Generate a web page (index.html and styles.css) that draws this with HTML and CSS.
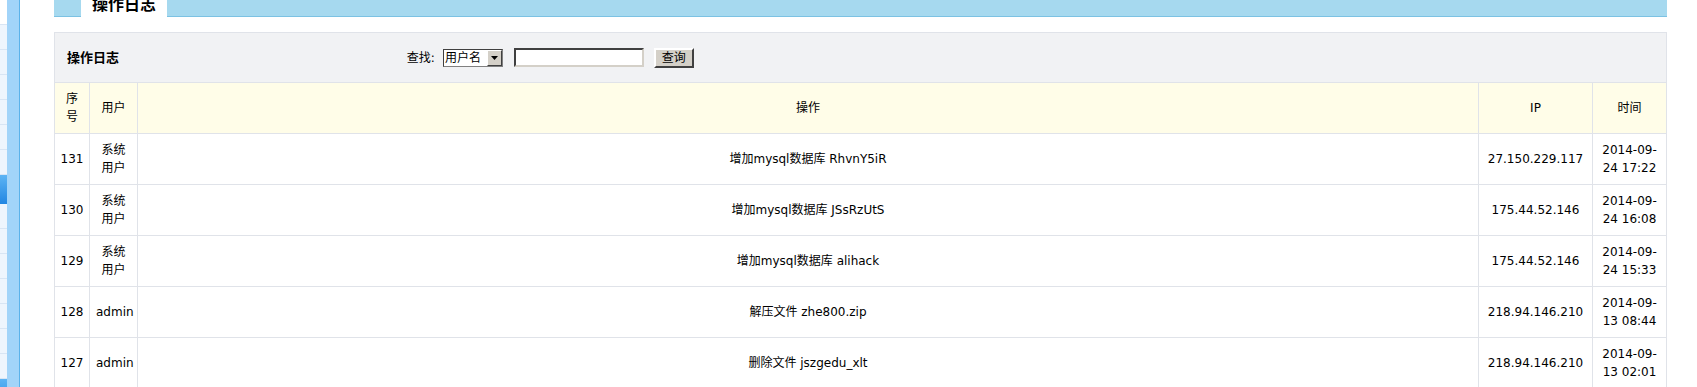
FILE: index.html
```html
<!DOCTYPE html>
<html>
<head>
    <link rel="stylesheet" href="styles.css">
</head>
<body>
    <div class="sidebar">
        <ul class="menu">
            <li class="menu-item first"></li>
            <li class="menu-item"></li>
            <li class="menu-item"></li>
            <li class="menu-item"></li>
            <li class="menu-item"></li>
            <li class="menu-item"></li>
            <li class="menu-item"></li>
            <li class="menu-item active"></li>
            <li class="menu-item"></li>
            <li class="menu-item"></li>
            <li class="menu-item"></li>
            <li class="menu-item"></li>
            <li class="menu-item"></li>
            <li class="menu-item"></li>
            <li class="menu-item"></li>
            <li class="menu-item active"></li>
        </ul>
        <div class="strip"></div>
    </div>

    <div class="main">
        <div class="tabbar">
            <span class="tab">操作日志</span>
        </div>

        <table class="log-table">
            <colgroup>
                <col class="col-id">
                <col class="col-user">
                <col>
                <col class="col-ip">
                <col class="col-time">
            </colgroup>
            <tr>
                <td colspan="5" class="toolbar">
                    <span class="toolbar-title">操作日志</span>
                    <span class="search">
                        <span class="search-label">查找:</span>
                        <span class="select">
                            <span class="select-value">用户名</span>
                            <span class="select-btn">
                                <svg width="7" height="4" viewBox="0 0 7 4"><path d="M0 0h7L3.5 4z" fill="#000"/></svg>
                            </span>
                        </span>
                        <input type="text" class="search-input">
                        <button class="search-btn">查询</button>
                    </span>
                </td>
            </tr>
            <tr class="head">
                <th>序号</th>
                <th>用户</th>
                <th>操作</th>
                <th>IP</th>
                <th>时间</th>
            </tr>
            <tr>
                <td>131</td>
                <td>系统用户</td>
                <td><span class="action">增加mysql数据库</span> RhvnY5iR</td>
                <td>27.150.229.117</td>
                <td>2014-09-<wbr>24 17:22</td>
            </tr>
            <tr>
                <td>130</td>
                <td>系统用户</td>
                <td><span class="action">增加mysql数据库</span> JSsRzUtS</td>
                <td>175.44.52.146</td>
                <td>2014-09-<wbr>24 16:08</td>
            </tr>
            <tr>
                <td>129</td>
                <td>系统用户</td>
                <td><span class="action">增加mysql数据库</span> alihack</td>
                <td>175.44.52.146</td>
                <td>2014-09-<wbr>24 15:33</td>
            </tr>
            <tr>
                <td>128</td>
                <td>admin</td>
                <td><span class="action">解压文件</span> zhe800.zip</td>
                <td>218.94.146.210</td>
                <td>2014-09-<wbr>13 08:44</td>
            </tr>
            <tr>
                <td>127</td>
                <td>admin</td>
                <td><span class="action">删除文件</span> jszgedu_xlt</td>
                <td>218.94.146.210</td>
                <td>2014-09-<wbr>13 02:01</td>
            </tr>
        </table>
    </div>
</body>
</html>
```

FILE: styles.css
```css
body {
    margin: 0;
    display: flex;
    align-items: flex-start;
    font-family: "DejaVu Sans", "Noto Sans CJK SC", sans-serif;
    font-size: 12px;
    color: #000;
    background: white;
    overflow: hidden;
}

/* left frame */
.sidebar {
    display: flex;
    width: 20px;
    height: 387px;
    flex-shrink: 0;
}

.menu {
    list-style: none;
    margin: 0;
    padding: 0;
    width: 7px;
}

.menu-item {
    height: 24px;
    background: #eef5fd;
    border-bottom: 1px solid #d8e5f4;
}

.menu-item.first {
    background: white;
}

.menu-item.active {
    height: 29px;
    border-bottom: none;
    background: linear-gradient(#5cb4f4, #2286e2);
}

.strip {
    width: 12px;
    background: #a2d4f9;
    border-right: 1px solid #5bb2ea;
}

/* content */
.main {
    width: 1613px;
    margin-left: 34px;
}

.tabbar {
    height: 16px;
    background: #a6d9ef;
    border-bottom: 1px solid #7cc2e3;
    padding-left: 27px;
}

.tab {
    display: inline-block;
    height: 17px;
    padding: 0 11px;
    background: white;
    font-size: 16px;
    font-weight: bold;
    line-height: 10px;
    overflow: hidden;
}

.log-table {
    margin-top: 15px;
    width: 1613px;
    border-collapse: collapse;
    table-layout: fixed;
}

.col-id { width: 35px; }
.col-user { width: 48px; }
.col-ip { width: 114px; }
.col-time { width: 74px; }

.log-table td,
.log-table th {
    border: 1px solid #e0e3e9;
    height: 50px;
    padding: 0 5px;
    line-height: 18px;
    text-align: center;
    vertical-align: middle;
    font-weight: normal;
}

.log-table td:first-child {
    padding: 0 2px;
}

.log-table th:first-child {
    padding: 0 6px;
}

.log-table td:nth-child(2),
.log-table th:nth-child(2) {
    padding: 0 6px;
}

.head th {
    background: #fffde8;
}

.log-table td.toolbar {
    background: #f1f2f4;
    text-align: left;
    padding-left: 12px;
    height: 49px;
}

.toolbar-title {
    display: inline-block;
    width: 336px;
    font-size: 13px;
    font-weight: bold;
    vertical-align: middle;
}

.search {
    display: inline-flex;
    align-items: center;
    vertical-align: middle;
}

.search-label {
    margin-right: 8px;
}

.select {
    display: inline-flex;
    align-items: stretch;
    width: 60px;
    height: 18px;
    box-sizing: border-box;
    border: 1px solid #404040;
    border-right-color: #808080;
    border-bottom-color: #808080;
    background: white;
}

.select-value {
    flex: 1;
    line-height: 16px;
    padding-left: 1px;
}

.select-btn {
    width: 15px;
    display: flex;
    align-items: center;
    justify-content: center;
    box-sizing: border-box;
    background: #d4d0c8;
    border: 1px solid;
    border-color: #fff #404040 #404040 #fff;
}

.search-input {
    margin: 0 0 0 11px;
    width: 130px;
    height: 19px;
    box-sizing: border-box;
    padding: 0 2px;
    border: 2px solid;
    border-color: #404040 #d4d0c8 #d4d0c8 #404040;
    background: white;
    font: inherit;
}

.search-btn {
    margin-left: 10px;
    width: 40px;
    height: 20px;
    box-sizing: border-box;
    padding: 0;
    border: 2px solid;
    border-color: #fff #404040 #404040 #fff;
    background: #d4d0c8;
    font: inherit;
    line-height: 16px;
    color: #000;
}
```
